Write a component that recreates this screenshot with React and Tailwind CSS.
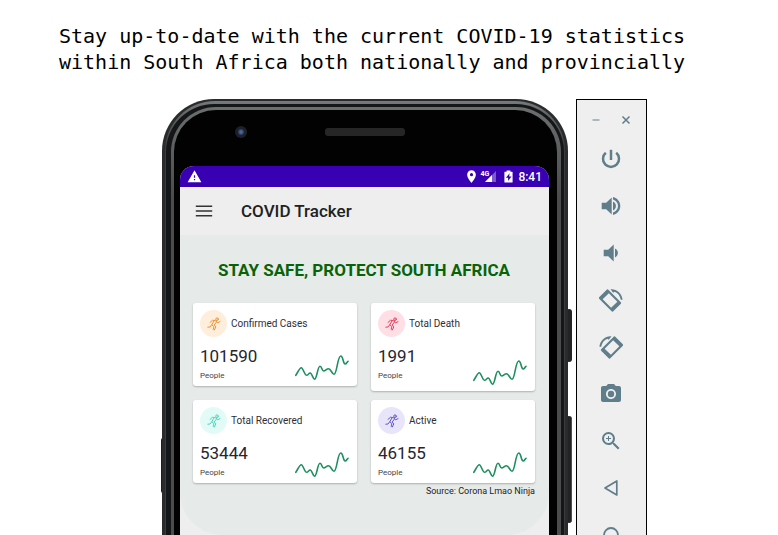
import React from "react";
import { MdPhotoCamera, MdZoomIn, MdLocationOn, MdWarning } from "react-icons/md";

function PowerIcon({ className }) {
  return (
    <svg viewBox="0 0 24 24" className={className} fill="none" stroke="currentColor" strokeWidth="2.500" aria-hidden="true">
      <path d="M12 2.800v10.200" />
      <path d="M17.200 5.800a8 8 0 1 1-10.400 0" />
    </svg>
  );
}

function VolumeUpIcon({ className }) {
  return (
    <svg viewBox="0 0 24 24" className={className} fill="currentColor" aria-hidden="true">
      <path d="M2.700 8.700v6.600h4.500l5.500 5.300V3.400L7.200 8.700z" />
      <path d="M14 7.600v8.800c1.700-.7 2.900-2.400 2.900-4.400S15.700 8.300 14 7.600z" />
      <path d="M14 3v2.500c2.900.9 5 3.500 5 6.500s-2.100 5.600-5 6.500V21c4.200-.9 7.300-4.600 7.300-9S18.200 3.900 14 3z" />
    </svg>
  );
}

function VolumeDownIcon({ className }) {
  return (
    <svg viewBox="0 0 24 24" className={className} fill="currentColor" aria-hidden="true">
      <path d="M4.700 8.700v6.600h4.500l5.500 5.300V3.400L9.200 8.700z" />
      <path d="M16 7.600v8.800c1.700-.7 2.900-2.400 2.900-4.400S17.700 8.300 16 7.600z" />
    </svg>
  );
}

function RotateLeftIcon({ className }) {
  return (
    <svg viewBox="0 0 24 24" className={className} fill="currentColor" aria-hidden="true">
      <g transform="rotate(45 11 12.5)">
        <path
          fillRule="evenodd"
          d="M2.500 6h17a1.500 1.500 0 0 1 1.500 1.500v10a1.500 1.500 0 0 1-1.500 1.500h-17A1.500 1.500 0 0 1 1 17.500v-10A1.500 1.500 0 0 1 2.500 6zM5 8.100v8.800h12V8.100z"
        />
      </g>
      <path d="M11.500 1.200 C17.500 0.600 22.800 5 23.600 11.800 H21.800 C21.200 8 19 5 15.600 3.700 L14.200 4.800z" />
    </svg>
  );
}

function RotateRightIcon({ className }) {
  return (
    <span className="flex -scale-x-100">
      <RotateLeftIcon className={className} />
    </span>
  );
}

function BackIcon({ className }) {
  return (
    <svg viewBox="0 0 24 24" className={className} fill="none" stroke="currentColor" strokeWidth="1.700" strokeLinejoin="round" aria-hidden="true">
      <path d="M17.800 5v14L6 12z" />
    </svg>
  );
}

function HomeIcon({ className }) {
  return (
    <svg viewBox="0 0 24 24" className={className} fill="none" stroke="currentColor" strokeWidth="1.800" aria-hidden="true">
      <circle cx="12" cy="12" r="7" />
    </svg>
  );
}

function MenuIcon() {
  return (
    <svg viewBox="0 0 22 22" className="size-[22px]" stroke="currentColor" strokeWidth="1.500" aria-hidden="true">
      <path d="M2.800 6.200h16.400M2.800 11h16.400M2.800 15.800h16.400" />
    </svg>
  );
}

function SignalIcon() {
  return (
    <svg viewBox="0 0 11 11" className="size-[11px]" aria-hidden="true">
      <path d="M0 11L11 0v11z" fill="#fff" opacity="0.350" />
      <path d="M0 11L7 4v7z" fill="#fff" />
    </svg>
  );
}

function BatteryIcon({ className }) {
  return (
    <svg viewBox="0 0 9 13" className={className} aria-hidden="true">
      <path d="M2.600 0.500h3.800v1.300h1.700q0.500 0 0.500 0.500v9.700q0 0.500-0.500 0.500H0.900q-0.500 0-0.500-0.500V2.300q0-0.500 0.500-0.500h1.700z" fill="#fff" />
      <path d="M5.600 3.300L1.900 7.700h2.200v3.200l3.400-4.500H5.100z" fill="#3900b3" />
    </svg>
  );
}

function RunnerIcon() {
  return (
    <svg viewBox="0 0 16 16" className="size-4" fill="none" stroke="currentColor" strokeWidth="1" strokeLinecap="round" strokeLinejoin="round" aria-hidden="true">
      <circle cx="11" cy="3.200" r="1.300" />
      <path d="M4 6.400L6.600 4.200L9.800 4.800L11.600 6.900L14 5.600" />
      <path d="M8 4.900L5.900 8.600L4 11L1.800 11.200" />
      <path d="M10.300 6.200L8.200 9L9.800 10.900L8.300 14" />
      <path d="M5.900 8.800L7.900 10.600L7.200 13.500" />
    </svg>
  );
}

function Sparkline() {
  return (
    <svg viewBox="0 0 54 26" className="h-[26px] w-[54px]" fill="none" stroke="#1f8f5f" strokeWidth="1.600" strokeLinecap="round" strokeLinejoin="round" aria-hidden="true">
      <path d="M0.800 20.300C3 17 4.500 12.700 6.300 12.700S9.500 20.300 11.700 20.300C13 20.300 13.800 18 15.200 18C17 18 18 24.300 19.500 24.300C22 24.300 22.500 11.300 25 11.300C27 11.300 26.800 16 28.700 16C30.500 16 31.500 13.700 33.500 13.700C36 13.700 37 19.300 39 19.300C42 19.300 42.500 1 45.700 1C48.500 1 47.800 9 50.200 9C51.500 9 52 7 53 6.300" />
    </svg>
  );
}

const stats = [
  { label: "Confirmed Cases", value: "101590", icon: "bg-[#ffeedb] text-[#ee9436]", height: "h-[83px]" },
  { label: "Total Death", value: "1991", icon: "bg-[#ffdfe5] text-[#e8405c]", height: "h-[88px]" },
  { label: "Total Recovered", value: "53444", icon: "bg-[#e3fbf6] text-[#4fd6bd]", height: "h-[83px]" },
  { label: "Active", value: "46155", icon: "bg-[#e8e5fa] text-[#6258cf]", height: "h-[83px]" },
];

function StatCard({ label, value, icon, height }) {
  return (
    <article className={`flex flex-col rounded-[3px] bg-white px-[7px] pt-[7px] shadow-[0_1px_2px_rgba(0,0,0,0.25)] ${height}`}>
      <div className="flex items-center gap-1">
        <span className={`flex size-[27px] items-center justify-center rounded-full ${icon}`}>
          <RunnerIcon />
        </span>
        <h3 className="text-[10px] leading-3 text-[#2e2e3a]">{label}</h3>
      </div>
      <div className="flex grow justify-between">
        <div className="pt-[9px]">
          <p className="text-[17px] leading-5 text-[#262633]">{value}</p>
          <p className="pt-1 text-[8px] leading-3 text-[#44444e]">People</p>
        </div>
        <div className="flex items-end pb-[5px] pr-px">
          <Sparkline />
        </div>
      </div>
    </article>
  );
}

const tools = [
  { name: "Power", Icon: PowerIcon },
  { name: "Volume up", Icon: VolumeUpIcon },
  { name: "Volume down", Icon: VolumeDownIcon },
  { name: "Rotate left", Icon: RotateLeftIcon },
  { name: "Rotate right", Icon: RotateRightIcon },
  { name: "Take screenshot", Icon: MdPhotoCamera },
  { name: "Zoom", Icon: MdZoomIn },
  { name: "Back", Icon: BackIcon },
  { name: "Home", Icon: HomeIcon },
];

function Toolbar() {
  return (
    <aside className="w-[71px] shrink-0 border border-black bg-[#efefef] pr-px text-[#5f7d8a]">
      <div className="flex h-[35px] items-center justify-center gap-5 pt-1">
        <button aria-label="Minimize" className="flex size-[10px] items-center">
          <svg viewBox="0 0 10 10" className="size-[10px]" stroke="#93a4ab" strokeWidth="1.500">
            <path d="M1.500 5h7" />
          </svg>
        </button>
        <button aria-label="Close" className="flex size-[10px] items-center">
          <svg viewBox="0 0 10 10" className="size-[10px]" stroke="currentColor" strokeWidth="1.500">
            <path d="M1.500 1.500l7 7M8.500 1.500l-7 7" />
          </svg>
        </button>
      </div>
      {tools.map(({ name, Icon }) => (
        <button key={name} aria-label={name} className="flex h-[47px] w-full items-center justify-center">
          <Icon className="size-6" />
        </button>
      ))}
    </aside>
  );
}

function Screen() {
  return (
    <div className="flex grow flex-col overflow-hidden rounded-t-[14px] bg-[#eeeeee]">
      <div className="flex h-[21px] items-center bg-[#3900b3] px-[7px] text-white">
        <MdWarning className="size-[15px]" />
        <div className="ml-auto flex items-center">
          <MdLocationOn className="size-[15px]" />
          <div className="ml-[2px] flex items-center">
            <span className="-mr-1 self-start text-[7px] font-bold leading-[7px]">4G</span>
            <SignalIcon />
          </div>
          <BatteryIcon className="ml-2 h-[13px] w-[9px]" />
          <span className="ml-[5px] text-[12px] font-medium leading-4">8:41</span>
        </div>
      </div>
      <header className="flex h-12 items-center pl-[13px] pr-3">
        <button aria-label="Open menu" className="text-[#333333]">
          <MenuIcon />
        </button>
        <h1 className="ml-[26px] text-[17px] font-medium leading-6 text-[#212121]">COVID Tracker</h1>
      </header>
      <main className="h-[300px] rounded-b-[42px] bg-[#e6ebe9] pl-[13px] pr-[14px] pt-[23px]">
        <h2 className="text-center text-[17px] font-bold leading-6 text-[#086308]">STAY SAFE, PROTECT SOUTH AFRICA</h2>
        <div className="mt-[21px] grid grid-cols-2 items-start gap-x-[14px] gap-y-[9px]">
          {stats.map((s) => (
            <StatCard key={s.label} {...s} />
          ))}
        </div>
        <p className="pt-[2px] text-right text-[9px] leading-3 text-[#1c1c28]">Source: Corona Lmao Ninja</p>
      </main>
    </div>
  );
}

function Phone() {
  return (
    <div className="relative flex w-[406px] shrink-0">
      <span className="absolute -left-px top-[339px] h-[55px] w-1 rounded-sm bg-[#1c1c1c]" />
      <span className="absolute -right-1 top-[210px] h-[53px] w-[6px] rounded-sm bg-[#222324]" />
      <span className="absolute -right-1 top-[317px] h-[107px] w-[6px] rounded-sm border-r border-[#4b4c4d] bg-[#222324]" />
      <div className="relative flex grow rounded-t-[52px] bg-[#292b2c] px-[3px] pt-[2px]">
        <div className="flex grow rounded-t-[50px] bg-gradient-to-b from-[#777a7b] to-[#3a3c3d] to-10% pl-px pr-px pt-[3px]">
          <div className="flex grow rounded-t-[48px] bg-[#151617] pl-[5px] pr-[3px] pt-[3px]">
            <div className="flex grow rounded-t-[45px] bg-gradient-to-b from-[#6c6f70] to-[#4a4c4d] to-20% pl-[3px] pr-1 pt-[3px]">
              <div className="flex grow flex-col rounded-t-[42px] bg-[#020202] pl-[6px] pr-2">
                <div className="grid h-14 grid-cols-3 items-center pb-3 pl-[2px]">
                  <span className="ml-[53px] flex size-3 items-center justify-center rounded-full bg-[#1d2029]">
                    <span className="size-[6px] rounded-full bg-radial from-[#5a76a8] to-[#18233f]" />
                  </span>
                  <span className="h-2 w-20 justify-self-center rounded-[3px] bg-[#262626]" />
                </div>
                <Screen />
              </div>
            </div>
          </div>
        </div>
      </div>
    </div>
  );
}

export default function App() {
  return (
    <div className="h-screen overflow-hidden bg-white font-['Roboto',sans-serif]">
      <p className="pl-[59px] pt-[23px] font-['DejaVu_Sans_Mono',monospace] text-[20px] leading-[26px] text-black">
        Stay up-to-date with the current COVID-19 statistics
        <br />
        within South Africa both nationally and provincially
      </p>
      <div className="flex gap-2 pl-[162px] pt-6">
        <Phone />
        <Toolbar />
      </div>
    </div>
  );
}
